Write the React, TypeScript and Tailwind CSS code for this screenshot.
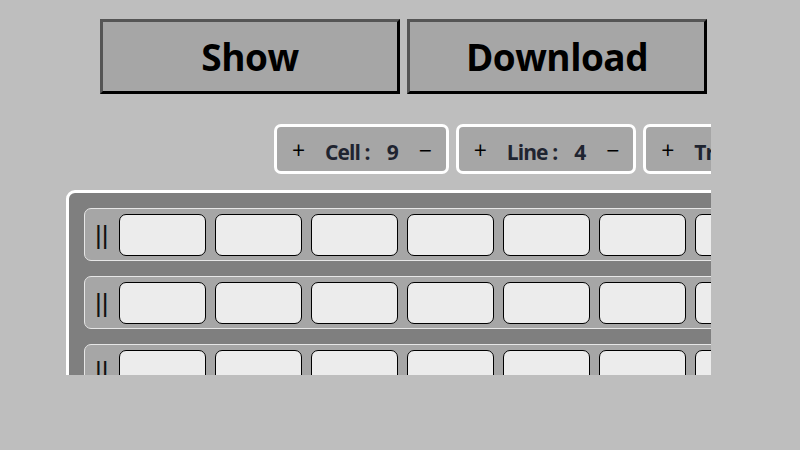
import React from "react";

const counters = [
  { label: "Cell", value: 9 },
  { label: "Line", value: 4 },
  { label: "Track", value: 1 },
];

const Counter = ({ label, value }: { label: string; value: number }) => {
  return (
    <div className="flex h-[50px] shrink-0 items-center rounded-[7px] border-[3px] border-white bg-[#a6a6a6] pl-[15px] pr-[14px] pt-[3px] text-[#1f2430]">
      <button className="w-[13px] text-[23px] leading-none text-black">+</button>
      <span className="ml-[20px] mt-[4px] text-[21px] font-bold tracking-[-0.9px]">{label} :</span>
      <span className="ml-[17px] mt-[4px] text-[21px] font-bold">{value}</span>
      <button className="ml-[20px] w-[13px] text-[23px] leading-none text-black">−</button>
    </div>
  );
};

const Row = () => {
  const cells = Array.from({ length: 9 });
  return (
    <div className="flex w-max items-center rounded-[7px] border border-[#e6e6e6] bg-[#a6a6a6] pb-[4px] pl-[10px] pr-[10px] pt-[5px]">
      <span className="font-['Liberation_Sans'] text-[26px] leading-none text-[#111]">||</span>
      <div className="ml-[10px] flex gap-[9px]">
        {cells.map((_, i) => (
          <div
            key={i}
            className="h-[42px] w-[87px] rounded-[7px] border border-black bg-[#ececec]"
          ></div>
        ))}
      </div>
    </div>
  );
};

export default function App() {
  return (
    <div className="min-h-[450px] w-[800px] bg-[#bebebe] font-['Open_Sans',sans-serif]">
      <div className="h-[375px] w-[711px] overflow-hidden">
        <div className="flex gap-[7px] pl-[100px] pt-[19px]">
          <button className="h-[75px] w-[300px] shrink-0 border-[3px] border-b-black border-l-[#555] border-r-black border-t-[#555] bg-[#a6a6a6] text-[37px] font-bold tracking-[-0.5px] text-black">
            Show
          </button>
          <button className="h-[75px] w-[300px] shrink-0 border-[3px] border-b-black border-l-[#555] border-r-black border-t-[#555] bg-[#a6a6a6] text-[37px] font-bold tracking-[-0.5px] text-black">
            Download
          </button>
        </div>
        <div className="mt-[30px] flex gap-[7px] pl-[274px]">
          {counters.map((c) => (
            <Counter key={c.label} label={c.label} value={c.value} />
          ))}
        </div>
        <div className="ml-[66px] mt-[16px] w-[1100px] rounded-tl-[9px] border-[3px] border-white bg-[#7f7f7f] pl-[15px] pt-[15px]">
          <div className="flex flex-col gap-[15px]">
            <Row />
            <Row />
            <Row />
            <Row />
          </div>
        </div>
      </div>
    </div>
  );
}
